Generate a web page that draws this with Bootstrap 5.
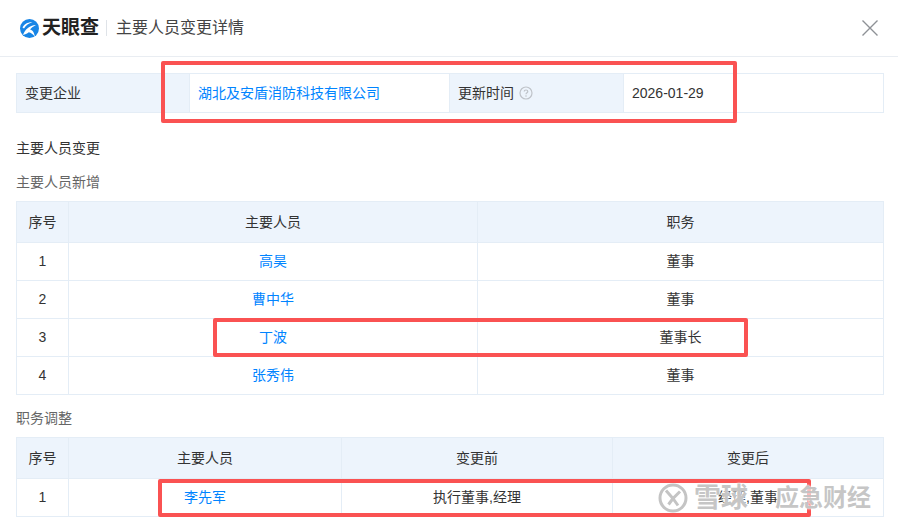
<!doctype html>
<html lang="zh"><head><meta charset="utf-8"><title>主要人员变更详情</title>
<link href="https://cdn.jsdelivr.net/npm/bootstrap@5.3.0/dist/css/bootstrap.min.css" rel="stylesheet">
<style>
html,body{height:100%;overflow:hidden}
body{font-family:"Liberation Sans","Noto Sans CJK SC",sans-serif;font-size:14px;color:#333;background:#fff;line-height:20px}
.sheet{width:898px;height:527px;overflow:hidden}
.topbar{height:57px;border-bottom:1px solid #e9edf2;padding:0 20px}
.brand-name{font-size:19px;font-weight:700;color:#222;margin-left:3px;line-height:24px}
.brand-sep{width:1px;height:16px;background:#dfe3e8;margin:0 8px 0 7px}
.dlg-title{font-size:16px;color:#444;margin-left:1px}
.closer{margin-left:auto;display:block}
.bodyarea{padding:16px 14px 0 16px}
.grid-t{table-layout:fixed;width:868px;margin:0;border-collapse:collapse;--bs-table-border-color:#e4edf6;--bs-table-color:#333;--bs-table-bg:transparent}
.grid-t>*>*>*{padding:0 8px;vertical-align:middle;border:1px solid #e4edf6;line-height:20px}
.grid-t th{font-weight:400;background:#edf4fc;color:#333}
.h42 th{height:41px}
.h38 td{height:38px;padding-bottom:2px}
.info-t td,.info-t th{height:39px}
.linkx{color:#0084ff;text-decoration:none}
.tip{display:inline-block;vertical-align:-2px;margin-left:1px}
.sect{color:#333;margin-top:25px;height:20px}
.sub{color:#666;margin-top:14px;margin-bottom:9px;height:20px}
.sub2{color:#666;margin-top:13px;margin-bottom:9px;height:20px}
.redbox{position:absolute;border:4px solid #fa5252;border-radius:2px;pointer-events:none}
.rb1{left:161px;top:61px;width:576px;height:62px}
.rb2{left:213px;top:318px;width:535px;height:39px}
.rb3{left:158px;top:479px;width:653px;height:38px}
.wm{position:absolute;left:658px;top:482px;display:flex;align-items:center;color:rgba(160,160,160,.6);line-height:32px;text-shadow:0 0 2px #fff,0 0 2px #fff;font-weight:700;pointer-events:none}
.wm svg{margin-right:6px}
.wm-a{font-size:27px}
.wm-b{font-size:24px;margin-left:27px}
</style></head>
<body>
<div class="sheet position-relative">
  <div class="topbar d-flex align-items-center">
    <svg width="19" height="19" viewBox="0 0 19 19"><circle cx="9.5" cy="9.5" r="9.5" fill="#1785e6"/><path d="M3 16C5 10.500 9 6.500 16 6 13 7.500 11 9 10 10.500 12.500 11 14 13 15 18 13 15 11 13.500 8.800 13.200 7 14.500 5 15.500 3 16Z" fill="#fff"/><path d="M2.500 8.500C4 5 8 2.800 12.500 3.200 8.500 4.300 6 6 4 9.500Z" fill="#fff"/></svg>
    <span class="brand-name">天眼查</span>
    <span class="brand-sep"></span>
    <span class="dlg-title">主要人员变更详情</span>
    <svg class="closer" width="16" height="16" viewBox="0 0 16 16"><path d="M.5.5l15 15M15.500.5l-15 15" stroke="#8e9196" stroke-width="1.400" fill="none"/></svg>
  </div>
  <div class="bodyarea">
    <table class="grid-t info-t">
      <colgroup><col style="width:173px"><col style="width:260px"><col style="width:174px"><col></colgroup>
      <tbody><tr>
        <th>变更企业</th>
        <td><a class="linkx" href="#">湖北及安盾消防科技有限公司</a></td>
        <th>更新时间 <svg class="tip" width="14" height="14" viewBox="0 0 14 14"><circle cx="7" cy="7" r="6" fill="none" stroke="#bfc3c9" stroke-width="1.200"/><path d="M5.200 5.600C5.200 4.500 6 4 7 4s1.800.6 1.800 1.500C8.800 6.800 7 6.700 7 8.300" fill="none" stroke="#bfc3c9" stroke-width="1.200"/><circle cx="7" cy="10" r=".8" fill="#bfc3c9"/></svg></th>
        <td>2026-01-29</td>
      </tr></tbody>
    </table>
    <div class="sect">主要人员变更</div>
    <div class="sub">主要人员新增</div>
    <table class="grid-t text-center h42 h38">
      <colgroup><col style="width:52px"><col style="width:409px"><col></colgroup>
      <thead><tr><th>序号</th><th>主要人员</th><th>职务</th></tr></thead>
      <tbody>
        <tr><td>1</td><td><a class="linkx" href="#">高昊</a></td><td>董事</td></tr>
        <tr><td>2</td><td><a class="linkx" href="#">曹中华</a></td><td>董事</td></tr>
        <tr><td>3</td><td><a class="linkx" href="#">丁波</a></td><td>董事长</td></tr>
        <tr><td>4</td><td><a class="linkx" href="#">张秀伟</a></td><td>董事</td></tr>
      </tbody>
    </table>
    <div class="sub2">职务调整</div>
    <table class="grid-t text-center h42 h38">
      <colgroup><col style="width:52px"><col style="width:273px"><col style="width:271px"><col></colgroup>
      <thead><tr><th>序号</th><th>主要人员</th><th>变更前</th><th>变更后</th></tr></thead>
      <tbody><tr><td>1</td><td><a class="linkx" href="#">李先军</a></td><td>执行董事,经理</td><td>经理,董事</td></tr></tbody>
    </table>
  </div>
  <div class="redbox rb1"></div>
  <div class="redbox rb2"></div>
  <div class="redbox rb3"></div>
  <div class="wm">
    <svg width="30" height="30" viewBox="0 0 30 30"><circle cx="15" cy="15" r="13" fill="none" stroke="#c4c4c4" stroke-width="3"/><path d="M8 7.500l7 8-4.500 6M22 8.500l-7 7 5 7" fill="none" stroke="#c4c4c4" stroke-width="3"/></svg>
    <span class="wm-a">雪球</span><span class="wm-b">应急财经</span>
  </div>
</div>
<script src="https://cdn.jsdelivr.net/npm/bootstrap@5.3.0/dist/js/bootstrap.bundle.min.js"></script>
</body></html>
